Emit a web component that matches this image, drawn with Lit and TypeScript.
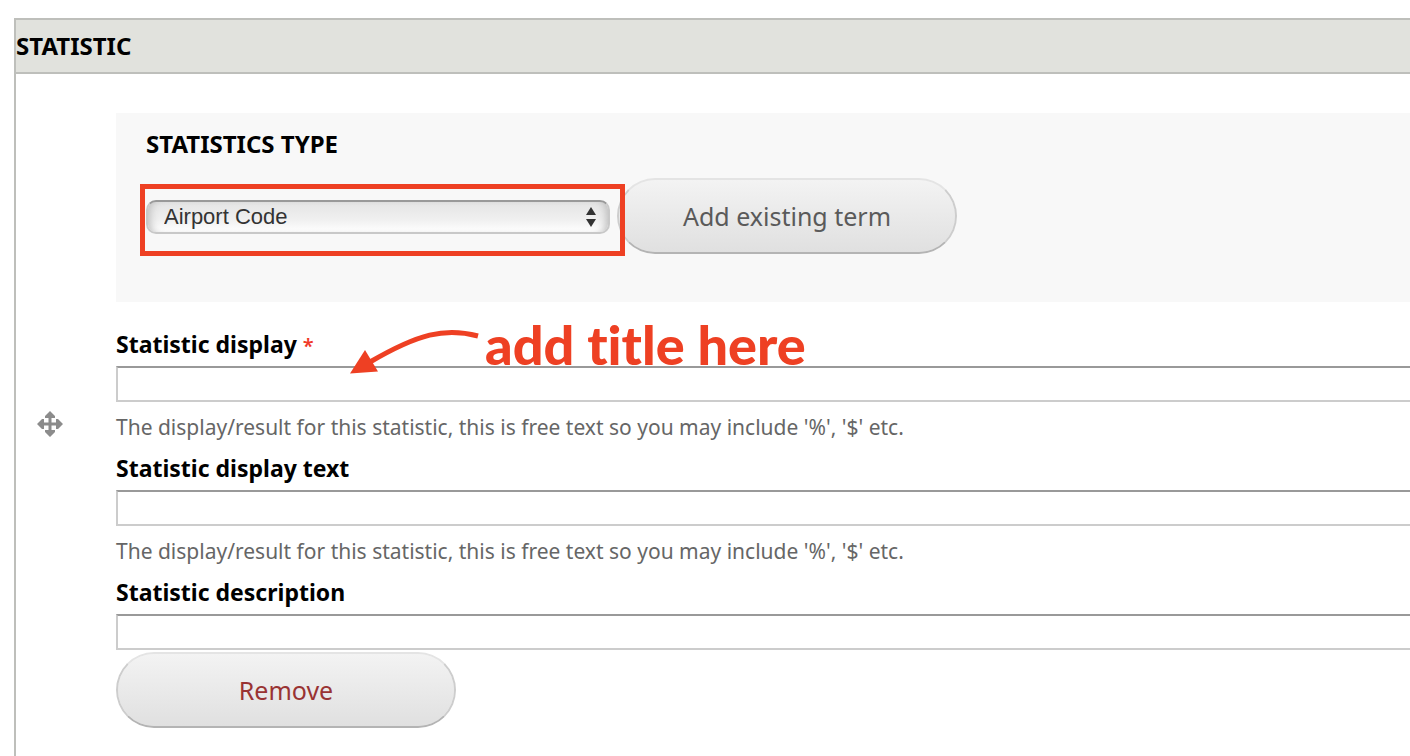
import { LitElement, html, css, svg, nothing } from "lit";
import { customElement } from "lit/decorators.js";

interface TextField {
  id: string;
  label: string;
  required?: boolean;
  help?: string;
}

const HELP = "The display/result for this statistic, this is free text so you may include '%', '$' etc.";

const FIELDS: TextField[] = [
  { id: "display", label: "Statistic display", required: true, help: HELP },
  { id: "display-text", label: "Statistic display text", help: HELP },
  { id: "description", label: "Statistic description" },
];

@customElement("app-root")
export class AppRoot extends LitElement {
  static styles = css`
    :host {
      display: block;
      box-sizing: border-box;
      height: 100vh;
      overflow: hidden;
      padding: 18px 0 0 14px;
      background: #fff;
      color: #000;
      font-family: "Noto Sans", "Open Sans", sans-serif;
      font-size: 23px;
      line-height: 28px;
    }
    * {
      box-sizing: border-box;
    }
    .panel {
      border: 2px solid #bebfbb;
      border-right: none;
    }
    .title {
      margin: 0;
      padding: 12px 0;
      border-bottom: 2px solid #bebfbb;
      background: #e1e2dd;
      font-size: 24px;
      line-height: 28px;
      font-weight: 700;
    }
    .row {
      display: grid;
      grid-template-columns: 68px 1fr;
      column-gap: 32px;
    }
    .content {
      padding: 39px 0 46px;
    }
    .handle {
      align-self: center;
      justify-self: center;
      display: flex;
      padding: 0;
      border: none;
      background: none;
      cursor: move;
    }
    .handle svg {
      width: 26px;
      height: 26px;
      fill: #8c8c8c;
    }
    .type {
      padding: 17px 30px 48px;
      margin-bottom: 28px;
      background: #f8f8f8;
    }
    .label {
      display: block;
      width: fit-content;
      font-weight: 700;
    }
    .type .label {
      font-size: 24px;
    }
    .controls {
      display: flex;
      align-items: center;
      gap: 7px;
      margin-top: 20px;
    }
    .picker {
      position: relative;
      width: 464px;
      padding-top: 2px;
    }
    .select {
      display: block;
      appearance: none;
      width: 100%;
      height: 34px;
      padding: 0 40px 2px 16px;
      border: 2px solid #c8c8c8;
      border-top-color: #999;
      border-radius: 10px;
      background: linear-gradient(#e4e4e4, #f0f0f0 60%, #fff);
      box-shadow: inset 8px 0 8px -6px #bbb, inset -8px 0 8px -6px #bbb;
      color: #333;
      font: 22px "Liberation Sans", Arial, sans-serif;
    }
    .updown {
      position: absolute;
      right: 13px;
      top: 9px;
      width: 12px;
      height: 20px;
      fill: #333;
      pointer-events: none;
    }
    .highlight {
      position: absolute;
      inset: -14px -15px -22px -6px;
      z-index: 1;
      border: 5px solid #ee4023;
      pointer-events: none;
    }
    .button {
      display: block;
      width: 340px;
      height: 76px;
      padding: 0;
      border: 2px solid #cdcdcd;
      border-top-color: #e4e4e4;
      border-bottom-color: #b4b4b4;
      border-radius: 38px;
      background: linear-gradient(#f3f3f3, #e0e0e0) padding-box;
      color: #5a5a5a;
      font: 25px "Noto Sans", "Open Sans", sans-serif;
    }
    .remove {
      margin-top: 2px;
      color: #933;
    }
    .field {
      position: relative;
    }
    .field + .field {
      margin-top: 15px;
    }
    .required {
      color: #f03a2a;
      font-size: 20px;
      line-height: 20px;
      font-weight: 600;
    }
    .input {
      display: block;
      width: 100%;
      height: 36px;
      margin-top: 8px;
      padding: 0 8px;
      border: 2px solid #ccc;
      border-top-color: #999;
      border-right: none;
      background: #fff;
      font: inherit;
    }
    .help {
      margin: 13px 0 0;
      color: #666;
      font-size: 21px;
      line-height: 24px;
    }
    .note {
      position: absolute;
      left: 234px;
      top: -10px;
      display: flex;
      gap: 6px;
      color: #ee4023;
      font: 900 54px/50px Lato, sans-serif;
      font-variant-ligatures: none;
      white-space: nowrap;
      pointer-events: none;
    }
    .note svg {
      width: 129px;
      height: 56px;
    }
  `;

  private renderNote() {
    return html`<div class="note">
      <svg viewBox="0 0 129 56" aria-hidden="true">
        <path d="M128 16 C95 7 68 14 20 42" fill="none" stroke="currentColor" stroke-width="5" />
        <path d="M0 53.5 L15 30 L28 51.5 Z" fill="currentColor" />
      </svg>
      <span>add title here</span>
    </div>`;
  }

  private renderField(field: TextField, index: number) {
    return html`<div class="field">
      <label class="label" for=${field.id}
        >${field.label}${field.required ? html` <span class="required">*</span>` : nothing}</label
      >
      <input class="input" id=${field.id} type="text" ?required=${field.required} />
      ${field.help ? html`<p class="help">${field.help}</p>` : nothing}
      ${index === 0 ? this.renderNote() : nothing}
    </div>`;
  }

  render() {
    return html`<section class="panel">
      <h2 class="title">STATISTIC</h2>
      <div class="row">
        <button class="handle" type="button" aria-label="Drag to re-order">
          <svg viewBox="0 0 26 26" aria-hidden="true">
            ${[0, 90, 180, 270].map(
              (a) =>
                svg`<path transform="rotate(${a} 13 13)" d="M13 0 L18 5 V7 H14.5 V14 H11.5 V7 H8 V5 Z"/>`
            )}
          </svg>
        </button>
        <div class="content">
          <div class="type">
            <label class="label" for="type">STATISTICS TYPE</label>
            <div class="controls">
              <div class="picker">
                <select class="select" id="type">
                  <option>Airport Code</option>
                </select>
                <svg class="updown" viewBox="0 0 12 20" aria-hidden="true">
                  <path d="M6 0 L11 8 H1 Z M1 12 H11 L6 20 Z" />
                </svg>
                <div class="highlight"></div>
              </div>
              <button class="button" type="button">Add existing term</button>
            </div>
          </div>
          ${FIELDS.map((f, i) => this.renderField(f, i))}
          <button class="button remove" type="button">Remove</button>
        </div>
      </div>
    </section>`;
  }
}
